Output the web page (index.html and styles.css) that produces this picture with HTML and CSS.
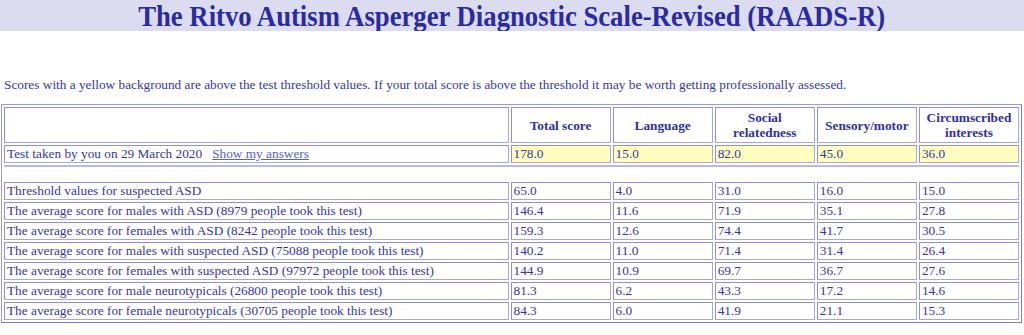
FILE: index.html
```html
<!DOCTYPE html>
<html>
<head>
<meta charset="utf-8">
<title>RAADS-R results</title>
<link rel="stylesheet" href="styles.css">
</head>
<body>
<h1 class="title"><span class="title-text">The Ritvo Autism Asperger Diagnostic Scale-Revised (RAADS-R)</span></h1>
<p class="intro">Scores with a yellow background are above the test threshold values. If your total score is above the threshold it may be worth getting professionally assessed.</p>
<table class="scores">
  <tr class="head">
    <th class="label"></th>
    <th>Total score</th>
    <th>Language</th>
    <th>Social<br>relatedness</th>
    <th>Sensory/motor</th>
    <th>Circumscribed<br>interests</th>
  </tr>
  <tr>
    <td class="label">Test taken by you on 29 March 2020 &nbsp; <a href="#" class="answers">Show my answers</a></td>
    <td class="high">178.0</td>
    <td class="high">15.0</td>
    <td class="high">82.0</td>
    <td class="high">45.0</td>
    <td class="high">36.0</td>
  </tr>
  <tr class="sep"><td colspan="6"></td></tr>
  <tr>
    <td class="label">Threshold values for suspected ASD</td>
    <td>65.0</td><td>4.0</td><td>31.0</td><td>16.0</td><td>15.0</td>
  </tr>
  <tr>
    <td class="label">The average score for males with ASD (8979 people took this test)</td>
    <td>146.4</td><td>11.6</td><td>71.9</td><td>35.1</td><td>27.8</td>
  </tr>
  <tr>
    <td class="label">The average score for females with ASD (8242 people took this test)</td>
    <td>159.3</td><td>12.6</td><td>74.4</td><td>41.7</td><td>30.5</td>
  </tr>
  <tr>
    <td class="label">The average score for males with suspected ASD (75088 people took this test)</td>
    <td>140.2</td><td>11.0</td><td>71.4</td><td>31.4</td><td>26.4</td>
  </tr>
  <tr>
    <td class="label">The average score for females with suspected ASD (97972 people took this test)</td>
    <td>144.9</td><td>10.9</td><td>69.7</td><td>36.7</td><td>27.6</td>
  </tr>
  <tr>
    <td class="label">The average score for male neurotypicals (26800 people took this test)</td>
    <td>81.3</td><td>6.2</td><td>43.3</td><td>17.2</td><td>14.6</td>
  </tr>
  <tr>
    <td class="label">The average score for female neurotypicals (30705 people took this test)</td>
    <td>84.3</td><td>6.0</td><td>41.9</td><td>21.1</td><td>15.3</td>
  </tr>
</table>
</body>
</html>
```

FILE: styles.css
```css
html, body {
  margin: 0;
  padding: 0;
  background: #ffffff;
}
body {
  font-family: "Liberation Serif", "Times New Roman", serif;
  color: #3636a8;
  font-size: 13.3px;
}
.title {
  margin: 0;
  height: 31px;
  line-height: 31px;
  background: #dcdcf0;
  color: #2a2aa2;
  text-align: center;
  font-size: 30px;
  font-weight: bold;
  overflow: hidden;
}
.title-text {
  display: inline-block;
  transform: scaleX(0.89);
  white-space: nowrap;
}
.intro {
  margin: 46px 0 0 4px;
  line-height: 15px;
}
.scores {
  margin: 12px 0 0 1px;
  border: 1px solid #9a9ae2;
  border-right-color: #7c7cd4;
  border-bottom-color: #7c7cd4;
  border-spacing: 2px;
  width: 1021px;
  table-layout: fixed;
}
.scores th,
.scores td {
  border: 1px solid #a6a6e6;
  border-top-color: #8e8edc;
  border-left-color: #8e8edc;
  padding: 1px 2px;
  line-height: 14px;
  text-align: left;
  vertical-align: middle;
  width: 100px;
  box-sizing: border-box;
}
.scores .label {
  width: 504px;
}
.scores th {
  font-weight: bold;
  text-align: center;
  line-height: 15px;
  padding: 2px 1px;
  height: 36px;
  color: #3030aa;
}
.scores td.high {
  background: #ffffc0;
}
.scores .sep td {
  border: none;
  border-top: 2px solid #b8b8ec;
  height: 15px;
  padding: 0;
}
.answers {
  color: #5a5ae4;
  text-decoration: underline;
}
```
